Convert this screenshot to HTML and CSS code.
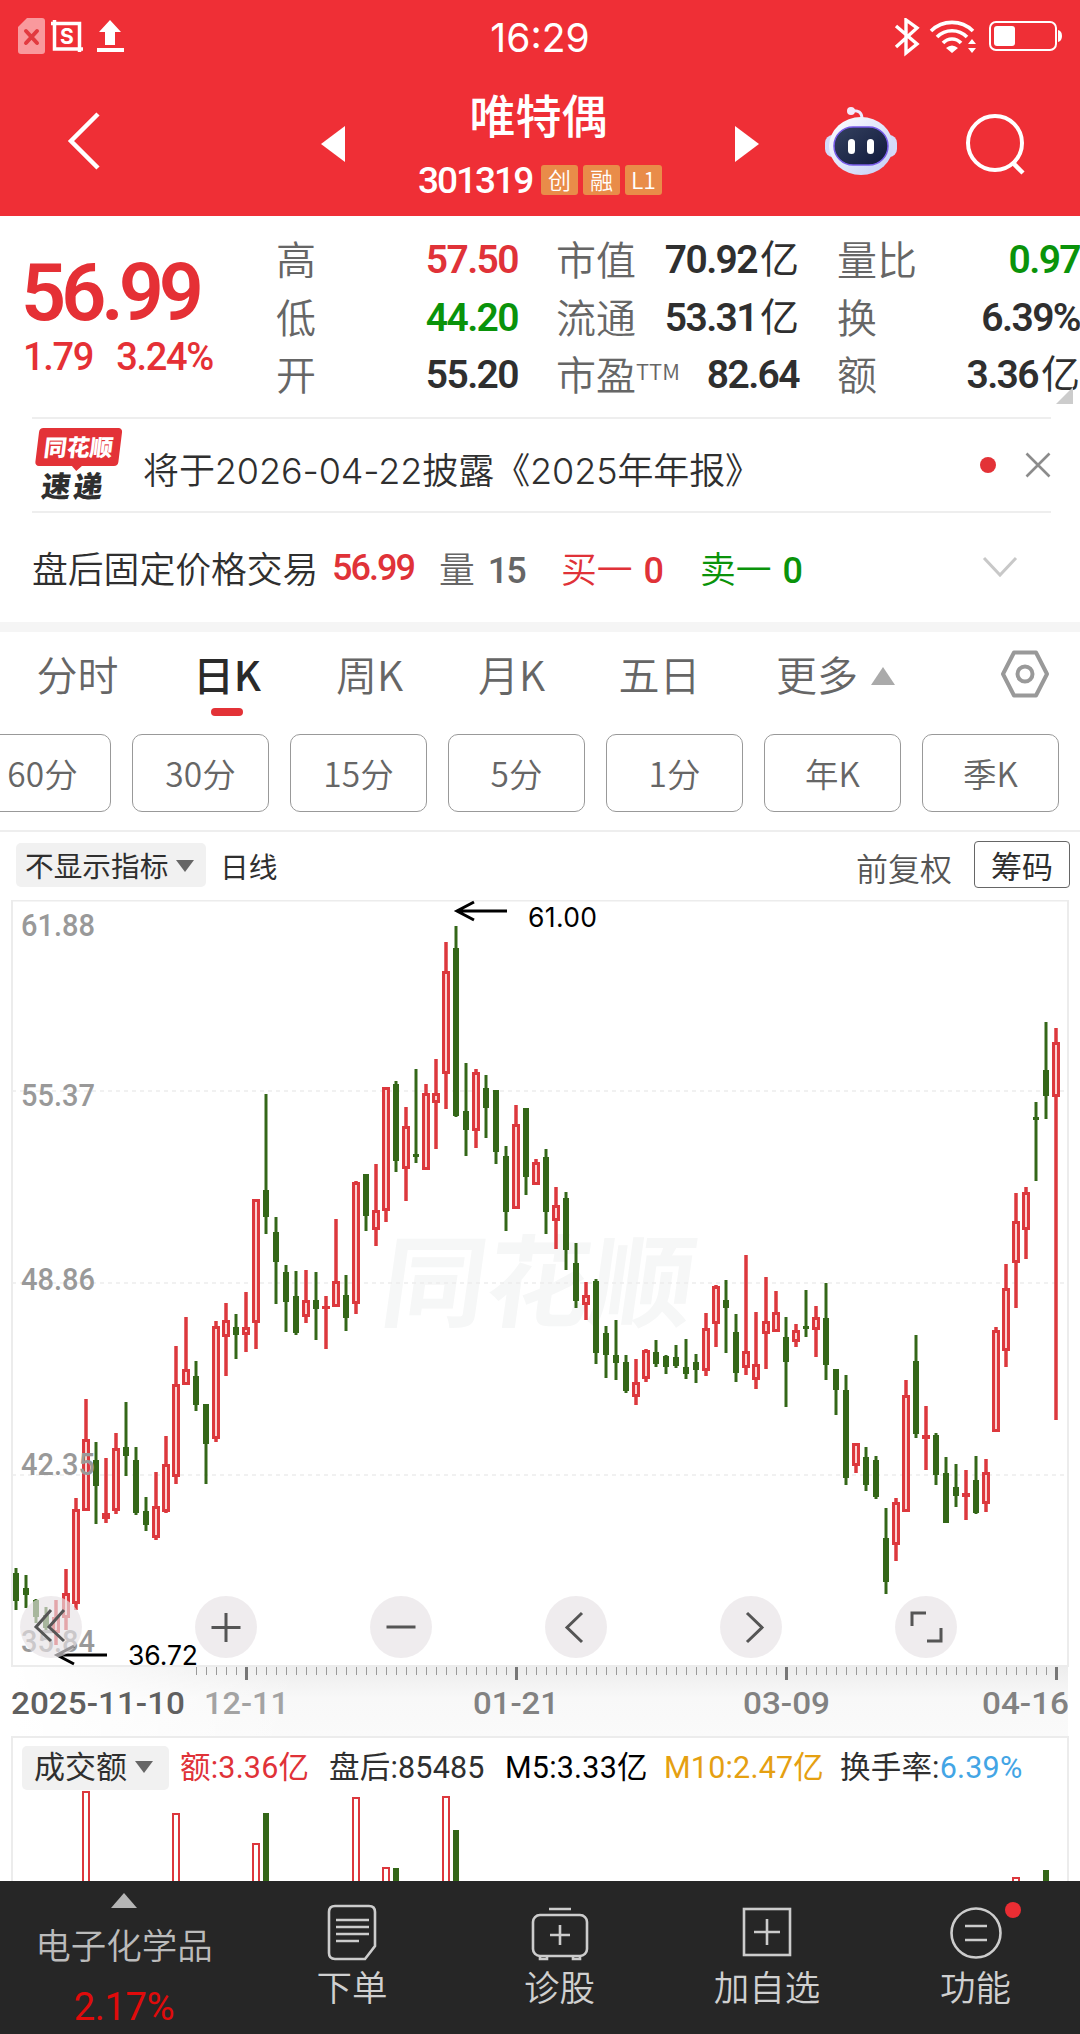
FILE: index.html
```html
<!DOCTYPE html>
<html lang="zh-CN">
<head>
    <meta charset="UTF-8">
    <title>唯特偶 301319</title>
    <link rel="stylesheet" href="styles.css">
</head>
<body>
    <header class="header">
        <div class="status-bar">
            <svg class="status-left" width="130" height="44" viewBox="0 0 130 44">
                <path d="M9 0h15a3 3 0 0 1 3 3v30a3 3 0 0 1-3 3H3a3 3 0 0 1-3-3V9z" fill="#f9999d"/>
                <path d="M8 13l11 12M19 13L8 25" stroke="#e23a40" stroke-width="4" stroke-linecap="round"/>
                <path d="M36.500 2v29H65M33 5.500h28.500V34" fill="none" stroke="#fff" stroke-width="3.500"/>
                <text x="49" y="25.5" class="shot-s">S</text>
                <path d="M92 2l11 12h-6v13H87V14h-6zM79 30h27v4H79z" fill="#fff"/>
            </svg>
            <span class="clock">16:29</span>
            <svg class="status-right" width="170" height="40" viewBox="0 0 170 40">
                <path d="M2 8l21 18-11 9V2l11 8L2 29" fill="none" stroke="#fff" stroke-width="3.4"/>
                <g fill="none" stroke="#fff" stroke-width="3.6">
                    <path d="M37 13a30 30 0 0 1 42 0M43 19a21 21 0 0 1 30 0M49 25a12 12 0 0 1 18 0"/>
                </g>
                <path d="M52 30q6-5 12 0l-6 5zM78 21l4 5h-8zM78 35l4-5h-8z" fill="#fff"/>
                <rect x="96" y="4" width="66" height="28" rx="6" fill="none" stroke="#fff" stroke-width="2"/>
                <rect x="100" y="8" width="21" height="20" rx="3" fill="#fff"/>
                <path d="M164 12q4 1 4 6t-4 6z" fill="#fff"/>
            </svg>
        </div>
        <div class="title-bar">
            <svg class="back" width="36" height="60" viewBox="0 0 36 60"><path d="M32 3L5 30l27 27" fill="none" stroke="#fff" stroke-width="4.5"/></svg>
            <svg class="prev" width="24" height="36" viewBox="0 0 24 36"><path d="M24 0v36L0 18z" fill="#fff"/></svg>
            <div class="stock">
                <h1>唯特偶</h1>
                <div class="code"><span class="num">301319</span><i>创</i><i>融</i><i>L1</i></div>
            </div>
            <svg class="next" width="24" height="36" viewBox="0 0 24 36"><path d="M0 0v36l24-18z" fill="#fff"/></svg>
            <svg class="robot" width="72" height="68" viewBox="0 0 72 68">
                <defs>
                    <linearGradient id="shell" x1="0" y1="0" x2="1" y2="1"><stop offset="0" stop-color="#fff"/><stop offset="1" stop-color="#c3cdf6"/></linearGradient>
                    <linearGradient id="visor" x1="0" y1="0" x2="1" y2="1"><stop offset="0" stop-color="#34415f"/><stop offset="1" stop-color="#10193b"/></linearGradient>
                </defs>
                <path d="M26 4q11-2 11 8" fill="none" stroke="#eceaff" stroke-width="3"/>
                <circle cx="26" cy="4" r="4" fill="#f4e9fb"/>
                <rect x="0" y="28" width="72" height="22" rx="8" fill="#d5daf9"/>
                <ellipse cx="36" cy="39" rx="32" ry="29" fill="url(#shell)"/>
                <rect x="9" y="20" width="54" height="38" rx="19" fill="url(#visor)" stroke="#775be8" stroke-width="1.5"/>
                <rect x="23" y="32" width="7" height="15" rx="3.5" fill="#fff"/>
                <rect x="42" y="32" width="7" height="15" rx="3.5" fill="#fff"/>
            </svg>
            <svg class="search" width="62" height="64" viewBox="0 0 62 64"><circle cx="30" cy="30" r="27" fill="none" stroke="#fff" stroke-width="4"/><path d="M47 49l11 11" stroke="#fff" stroke-width="4.5"/></svg>
        </div>
    </header>

    <section class="quote">
        <div class="price">
            <div class="last num">56.99</div>
            <div class="change num"><span>1.79</span><span>3.24%</span></div>
        </div>
        <div class="stats">
            <div><label>高</label><b class="red">57.50</b></div>
            <div><label>市值</label><b>70.92<em>亿</em></b></div>
            <div><label>量比</label><b class="green">0.97</b></div>
            <div><label>低</label><b class="green">44.20</b></div>
            <div><label>流通</label><b>53.31<em>亿</em></b></div>
            <div><label>换</label><b>6.39%</b></div>
            <div><label>开</label><b>55.20</b></div>
            <div><label>市盈<sup>TTM</sup></label><b>82.64</b></div>
            <div><label>额</label><b>3.36<em>亿</em></b></div>
        </div>
        <span class="corner"></span>
    </section>

    <section class="news">
        <div class="news-logo"><span>同花顺</span><strong>速递</strong></div>
        <p>将于2026-04-22披露《2025年年报》</p>
        <span class="dot"></span>
        <svg class="close" width="26" height="26" viewBox="0 0 26 26"><path d="M1.500 1.500l23 23M24.500 1.500l-23 23" stroke="#8c8c8c" stroke-width="2.600"/></svg>
    </section>

    <section class="after-hours">
        <span class="ah-title">盘后固定价格交易</span>
        <b class="ah-price red">56.99</b>
        <span class="ah-vol">量 <b>15</b></span>
        <span class="ah-buy red">买一 <b>0</b></span>
        <span class="ah-sell green">卖一 <b>0</b></span>
        <svg width="36" height="22" viewBox="0 0 36 22"><path d="M2 2l16 17L34 2" fill="none" stroke="#c8c8c8" stroke-width="3"/></svg>
    </section>

    <nav class="tabs">
        <span>分时</span>
        <span class="active">日K</span>
        <span>周K</span>
        <span>月K</span>
        <span>五日</span>
        <span class="more">更多<i></i></span>
        <svg width="50" height="48" viewBox="0 0 50 48"><path d="M14 2.500h22L47 24 36 45.500H14L3 24z" fill="none" stroke="#999" stroke-width="4" stroke-linejoin="round"/><circle cx="25" cy="24" r="7.500" fill="none" stroke="#999" stroke-width="4"/></svg>
    </nav>

    <div class="periods">
        <span>60分</span><span>30分</span><span>15分</span><span>5分</span><span>1分</span><span>年K</span><span>季K</span>
    </div>

    <div class="indicator">
        <span class="chip">不显示指标<i></i></span>
        <span class="line-name">日线</span>
        <span class="adjust">前复权</span>
        <span class="chips-btn">筹码</span>
    </div>

    <div class="chart">
        <svg id="kline" width="1080" height="836" viewBox="0 0 1080 836">
            <defs>
                <linearGradient id="axisBg" x1="0" y1="0" x2="0" y2="1"><stop offset="0" stop-color="#ededed"/><stop offset=".45" stop-color="#f8f8f8"/><stop offset="1" stop-color="#fafafa"/></linearGradient>
                <linearGradient id="axisFade" x1="0" y1="0" x2="1" y2="0"><stop offset=".05" stop-color="#fff"/><stop offset="1" stop-color="#fff" stop-opacity="0"/></linearGradient>
            </defs>
            <rect x="0" y="767" width="1068" height="69" fill="url(#axisBg)"/>
            <rect x="0" y="767" width="300" height="69" fill="url(#axisFade)"/>
            <text class="watermark" transform="translate(378 419) skewX(-8)" textLength="312" lengthAdjust="spacingAndGlyphs">同花顺</text>
            <rect x="12" y="0.500" width="1056" height="765.500" fill="none" stroke="#ececec" stroke-width="2"/>
            <path d="M12 191H1068M12 383H1068M12 575H1068" stroke="#ededed" stroke-width="1.500" stroke-dasharray="4 4"/>
            <g id="candles"></g>
            <g class="scale">
                <text x="21" y="36" textLength="74" lengthAdjust="spacingAndGlyphs">61.88</text>
                <text x="21" y="206" textLength="74" lengthAdjust="spacingAndGlyphs">55.37</text>
                <text x="21" y="390" textLength="74" lengthAdjust="spacingAndGlyphs">48.86</text>
                <text x="21" y="575" textLength="74" lengthAdjust="spacingAndGlyphs">42.35</text>
                <text x="21" y="752" textLength="74" lengthAdjust="spacingAndGlyphs">35.84</text>
            </g>
            <g fill="none" stroke="#000" stroke-width="3"><path d="M507 11H457M474 2l-17 9 17 9"/><path d="M107 755H57M74 746l-17 9 17 9"/></g>
            <text class="mark" x="528" y="27" textLength="69">61.00</text>
            <text class="mark" x="128" y="765" textLength="70">36.72</text>
            <g id="ticks"></g>
            <g class="dates">
                <text x="11" y="814" textLength="174" lengthAdjust="spacingAndGlyphs" class="first">2025-11-10</text>
                <text x="204" y="814" textLength="85" lengthAdjust="spacingAndGlyphs" class="faded">12-11</text>
                <text x="473" y="814" textLength="86" lengthAdjust="spacingAndGlyphs">01-21</text>
                <text x="743" y="814" textLength="87" lengthAdjust="spacingAndGlyphs">03-09</text>
                <text x="982" y="814" textLength="87" lengthAdjust="spacingAndGlyphs">04-16</text>
            </g>
        </svg>
        <div class="tools">
            <span><svg viewBox="0 0 62 62"><path d="M31 14L16 31l15 14M44 14L29 31l15 14"/></svg></span>
            <span><svg viewBox="0 0 62 62"><path d="M31 17v29M16.500 31.500h29"/></svg></span>
            <span><svg viewBox="0 0 62 62"><path d="M16.500 31h29"/></svg></span>
            <span><svg viewBox="0 0 62 62"><path d="M37 17L22 31.500 37 46"/></svg></span>
            <span><svg viewBox="0 0 62 62"><path d="M27 17l15 14.500L27 46"/></svg></span>
            <span><svg viewBox="0 0 62 62"><path d="M17 30V17h14M46 32v13H32"/></svg></span>
        </div>
    </div>

    <div class="volume">
        <div class="volume-head">
            <span class="chip">成交额<i></i></span>
            <span class="red">额:3.36亿</span>
            <span>盘后:85485</span>
            <span class="black">M5:3.33亿</span>
            <span class="orange">M10:2.47亿</span>
            <span>换手率:<em>6.39%</em></span>
        </div>
        <svg id="volumeBars" width="1054" height="92" viewBox="13 0 1054 92"></svg>
    </div>

    <footer class="bottom-bar">
        <div class="sector"><i></i><span>电子化学品</span><b>2.17%</b></div>
        <div class="action">
            <svg width="58" height="58" viewBox="0 0 58 58"><path d="M12 3h34q6 0 6 6v34L42 56H12q-6 0-6-6V9q0-6 6-6z"/><path d="M13 17h33M13 24h33M13 31h33M13 38h23"/></svg>
            <span>下单</span>
        </div>
        <div class="action">
            <svg width="58" height="58" viewBox="0 0 58 58"><path d="M18 6h22M9 53v3h7v-3M42 53v3h7v-3"/><rect x="2" y="12" width="54" height="41" rx="7"/><path d="M29 22v20M19 32h20"/></svg>
            <span>诊股</span>
        </div>
        <div class="action">
            <svg width="58" height="58" viewBox="0 0 58 58"><rect x="6" y="6" width="46" height="46"/><path d="M29 16v26M16 29h26"/></svg>
            <span>加自选</span>
        </div>
        <div class="action">
            <svg width="58" height="58" viewBox="0 0 58 58"><circle cx="29" cy="30" r="24.500"/><path d="M18 23h22M18 37h22"/></svg>
            <span>功能</span>
            <i class="badge"></i>
        </div>
    </footer>

    <script src="chart.js"></script>
</body>
</html>
```
FILE: styles.css
```css
/* General page styling */
* {
    box-sizing: border-box;
}

body {
    margin: 0;
    width: 1080px;
    height: 2034px;
    overflow: hidden;
    background-color: #fff;
    color: #2f2f2f;
    font-family: "Noto Sans CJK SC", sans-serif;
    font-weight: 350;
    display: flex;
    flex-direction: column;
}

i, em {
    font-style: normal;
}

svg {
    display: block;
    flex-shrink: 0;
}

.num, b {
    font-family: Roboto, "Noto Sans CJK SC", sans-serif;
    font-weight: 600;
    letter-spacing: -0.05em;
}

.red { color: #e03238; }
.green { color: #0a930a; }
.black { color: #000; }
.orange { color: #e5a011; }

/* Header */
.header {
    height: 216px;
    flex-shrink: 0;
    background-color: #ef2f36;
    color: #fff;
}

.status-bar {
    height: 72px;
    padding: 18px 16px 0 18px;
    display: grid;
    grid-template-columns: 1fr auto 1fr;
}

.clock {
    font-family: Inter, sans-serif;
    font-weight: 400;
    font-size: 39px;
    line-height: 40px;
    margin-right: 2px;
}

.status-right {
    justify-self: end;
}

.shot-s {
    font: 700 21px Inter, sans-serif;
    fill: #fff;
    text-anchor: middle;
}

.title-bar {
    height: 144px;
    display: flex;
    align-items: flex-start;
}

.back { margin: 39px 0 0 66px; }
.prev { margin: 54px 0 0 219px; }
.next { margin: 54px 0 0 67px; }
.robot { margin: 35px 0 0 66px; }
.search { margin: 41px 0 0 68px; }

.stock {
    width: 255px;
    margin-left: 68px;
    white-space: nowrap;
}

.stock h1 {
    margin: 11px 4px 0 0;
    font-size: 46px;
    font-weight: 500;
    line-height: 60px;
    text-align: center;
}

.code {
    display: flex;
    align-items: center;
    gap: 5px;
    margin-top: 20px;
    padding-left: 5px;
    height: 34px;
}

.code .num {
    width: 118px;
    font-size: 37px;
    font-weight: 500;
    letter-spacing: -2px;
    padding-top: 1px;
}

.code i {
    width: 37px;
    height: 30px;
    border-radius: 3px;
    background-color: #e98c49;
    font-size: 23px;
    line-height: 29px;
    text-align: center;
}

/* Quote block */
.quote {
    position: relative;
    height: 201px;
    flex-shrink: 0;
    display: flex;
}

.price {
    width: 276px;
    padding: 35px 0 0 21px;
    color: #e53035;
    flex-shrink: 0;
}

.last {
    font-size: 79px;
    line-height: 84px;
    letter-spacing: -5px;
}

.change {
    display: flex;
    gap: 23px;
    font-size: 38px;
    line-height: 44px;
    letter-spacing: -1.3px;
}

.change.num {
    font-weight: 500;
    padding-left: 2px;
}

.stats {
    display: grid;
    grid-template-columns: 242px 243px 243px;
    grid-template-rows: repeat(3, 57.5px);
    column-gap: 38px;
    padding-top: 14px;
}

.stats div {
    display: flex;
    justify-content: space-between;
    align-items: center;
    white-space: nowrap;
}

.stats label {
    font-size: 40px;
    line-height: 57px;
    color: #666;
}

.stats sup {
    font-size: 22px;
    line-height: 0;
    vertical-align: 10px;
}

.stats b {
    font-size: 39px;
    letter-spacing: -1.6px;
    line-height: 57px;
}

.stats b:not(:has(em)) {
    padding-top: 4px;
}

.stats em {
    font-family: "Noto Sans CJK SC", sans-serif;
    font-weight: 400;
    font-size: 39px;
    letter-spacing: 0;
    margin-left: 3px;
}

.corner {
    position: absolute;
    right: 7px;
    bottom: 13px;
    border-left: 17px solid transparent;
    border-bottom: 17px solid #ccc;
}

/* News row */
.news {
    height: 96px;
    flex-shrink: 0;
    margin: 0 29px 0 32px;
    border-top: 2px solid #eee;
    border-bottom: 2px solid #eee;
    display: flex;
    align-items: center;
}

.news-logo {
    width: 83px;
    height: 74px;
    margin-left: 3px;
    transform: skewX(-7deg);
    text-align: center;
    white-space: nowrap;
}

.news-logo span {
    display: block;
    height: 38px;
    border-radius: 4px;
    background-color: #e33237;
    color: #fff;
    font-size: 23px;
    font-weight: 900;
    line-height: 37px;
}

/* speech bubble tip */
.news-logo span::after {
    content: "";
    display: block;
    width: 0;
    margin: 0 auto;
    border: 6px solid transparent;
    border-top-color: #e33237;
    border-bottom: 0;
}

.news-logo strong {
    display: block;
    font-size: 29px;
    font-weight: 900;
    line-height: 36px;
    letter-spacing: 3px;
}

.news p {
    margin: 5px 0 0 25px;
    width: 640px;
    font-family: Inter, "Noto Sans CJK SC", sans-serif;
    font-size: 36px;
    letter-spacing: -0.1px;
    white-space: nowrap;
}

.dot {
    width: 16px;
    height: 16px;
    border-radius: 50%;
    background-color: #e33237;
    margin-left: 197px;
}

.news .close {
    margin-left: auto;
}

/* After-hours trading row */
.after-hours {
    height: 109px;
    flex-shrink: 0;
    padding-left: 32px;
    padding-bottom: 2px;
    display: flex;
    align-items: center;
    font-size: 35.8px;
    white-space: nowrap;
}

.after-hours b {
    font-size: 36px;
    letter-spacing: -2px;
    font-weight: 500;
}

.ah-title { width: 300px; }
.ah-price { width: 107px; padding-top: 3px; }
.ah-vol { width: 122px; color: #666; }
.ah-vol b { margin-left: 5px; }
.ah-buy { width: 139px; }
.ah-buy b, .ah-sell b { margin-left: 3px; }
.ah-sell { width: 282px; }

/* Chart type tabs */
.tabs {
    height: 112px;
    flex-shrink: 0;
    border-top: 10px solid #f5f5f5;
    display: grid;
    grid-template-columns: 155px 144px 141px 143px 153px 264px 50px;
    font-size: 41px;
    line-height: 82px;
    color: #666;
    text-align: center;
}

.tabs svg {
    margin-top: 18px;
}

.tabs .active {
    color: #2a2a2a;
    font-weight: 500;
}

.tabs .active::after {
    content: "";
    display: block;
    width: 32px;
    height: 8px;
    margin: -6px auto 0;
    border-radius: 4px;
    background-color: #e33237;
}

.tabs .more {
    text-align: left;
    padding-left: 40px;
}

.more i {
    display: inline-block;
    margin-left: 13px;
    border: 12px solid transparent;
    border-top: 0;
    border-bottom: 18px solid #aaa;
    vertical-align: 6px;
}

/* Minute periods */
.periods {
    height: 98px;
    flex-shrink: 0;
    display: flex;
    gap: 21px;
    margin-left: -26px;
    border-bottom: 2px solid #eee;
}

.periods span {
    width: 137px;
    height: 78px;
    flex-shrink: 0;
    border: 1.500px solid #999;
    border-radius: 10px;
    font-size: 33.5px;
    line-height: 76px;
    text-align: center;
    color: #666;
}

/* Indicator row */
.indicator {
    height: 68px;
    flex-shrink: 0;
    padding: 11px 10px 0 16px;
    display: flex;
    font-size: 28.7px;
    line-height: 46px;
    font-weight: 400;
}

.chip {
    height: 44px;
    border-radius: 5px;
    background-color: #f1f1f1;
    padding-left: 9px;
    line-height: 43px;
}

.indicator .chip {
    width: 190px;
}

.chip i {
    display: inline-block;
    margin-left: 8px;
    border: 9px solid transparent;
    border-bottom: 0;
    border-top: 12px solid #666;
    vertical-align: 5px;
}

.line-name {
    margin-left: 14px;
}

.adjust {
    margin-left: auto;
    font-size: 32px;
    font-weight: 350;
    line-height: 49px;
    color: #555;
}

.chips-btn {
    width: 96px;
    height: 47px;
    margin: -2px 0 0 22px;
    border: 1.500px solid #666;
    border-radius: 4px;
    font-size: 31px;
    line-height: 45px;
    text-align: center;
}

/* Candlestick chart */
.chart {
    position: relative;
    height: 836px;
    flex-shrink: 0;
}

.watermark {
    font-size: 100px;
    font-weight: 700;
    fill: #f6f7f7;
}

.scale text, .dates text {
    font-family: Roboto, sans-serif;
    font-size: 32px;
    font-weight: 500;
    fill: #999;
}

.dates text { fill: #828282; }
.dates .first { fill: #606060; }
.dates .faded { fill: #a3a3a3; }

.mark {
    font-family: Inter, sans-serif;
    font-size: 26.5px;
    font-weight: 400;
    fill: #000;
}

.tools {
    position: absolute;
    left: 19.5px;
    top: 696px;
    display: flex;
    gap: 113px;
}

.tools span {
    width: 62px;
    height: 62px;
    border-radius: 50%;
    background-color: rgba(230, 226, 229, 0.65);
}

.tools path {
    fill: none;
    stroke: #555;
    stroke-width: 3;
}

/* Turnover chart */
.volume {
    height: 145px;
    flex-shrink: 0;
    margin: 0 11px;
    border: 2px solid #ececec;
    border-bottom: 0;
    overflow: hidden;
}

.volume-head {
    height: 51px;
    padding: 8px 0 0 9px;
    display: grid;
    grid-template-columns: 158px 149px 176px 159px 176px 1fr;
    font-family: Roboto, "Noto Sans CJK SC", sans-serif;
    font-size: 30.5px;
    letter-spacing: 0.2px;
    line-height: 43px;
    font-weight: 400;
    white-space: nowrap;
}

.volume .chip {
    width: 147px;
    font-size: 31px;
    padding-left: 12px;
    letter-spacing: 0;
    line-height: 44px;
}

.volume em {
    color: #43a5e5;
}

/* Bottom navigation */
.bottom-bar {
    height: 153px;
    flex-shrink: 0;
    background-color: #262626;
    color: #d0d0d0;
    display: grid;
    grid-template-columns: 248px 208px 207px 208px 209px;
    font-size: 35.5px;
    text-align: center;
}

.sector {
    display: flex;
    flex-direction: column;
    align-items: center;
}

.sector i {
    margin-top: 12px;
    border: 13px solid transparent;
    border-top: 0;
    border-bottom: 15px solid #b5b5b5;
}

.sector span {
    margin-top: 15px;
    line-height: 42px;
    color: #bbb;
}

.sector b {
    margin-top: 21px;
    font-size: 38px;
    line-height: 42px;
    font-weight: 400;
    letter-spacing: -0.3px;
    color: #e00b0b;
}

.action {
    position: relative;
    display: flex;
    flex-direction: column;
    align-items: center;
    padding-top: 22px;
}

.action svg {
    fill: none;
    stroke: #ccc;
    stroke-width: 2.600;
}

.action span {
    margin-top: 4px;
    line-height: 42px;
}

.badge {
    position: absolute;
    left: 134px;
    top: 21px;
    width: 16px;
    height: 16px;
    border-radius: 50%;
    background-color: #ea2d33;
}
```
FILE: chart.js
```javascript
// one row per day: colour, high, low, body top, body bottom (y in chart pixels)
const days = [
    ['g',668,710,673,701],['g',675,708,688,695],['g',699,723,700,717],['g',707,730,715,728],['r',700,745,717,733],
    ['r',669,730,693,718],['r',598,710,609,704],['r',499,611,539,611],['g',542,624,560,586],['r',558,623,613,619],
    ['r',533,614,548,611],['g',502,576,547,556],['g',547,615,560,613],['g',597,631,611,625],['r',572,640,606,638],
    ['r',536,613,564,612],['r',446,584,484,577],['r',417,485,469,485],['g',461,511,476,505],['g',504,584,504,544],
    ['r',421,542,426,539],['r',403,476,420,437],['g',414,459,427,435],['r',392,452,427,435],['r',299,449,299,423],
    ['g',194,334,290,317],['g',317,404,332,362],['g',365,432,372,402],['g',371,435,396,433],['r',370,423,400,417],
    ['g',372,440,400,409],['r',396,449,406,409],['r',319,407,381,407],['g',375,431,395,418],['r',281,414,282,404],
    ['g',274,331,274,316],['r',264,346,310,330],['r',187,322,187,311],['g',181,272,184,261],['r',207,301,226,269],
    ['g',169,263,254,257],['r',184,270,193,270],['r',159,249,193,203],['r',42,209,71,174],['g',26,217,48,216],
    ['g',163,256,211,230],['r',169,248,172,231],['g',175,238,188,208],['g',190,264,190,252],['g',246,331,256,312],
    ['r',205,309,224,309],['g',208,295,208,277],['r',259,285,262,285],['g',249,334,257,312],['r',287,349,305,321],
    ['g',292,370,298,350],['g',343,408,363,401],['r',382,420,395,405],['g',379,464,381,453],['g',426,478,433,455],
    ['g',420,480,455,463],['g',455,493,462,491],['r',459,505,482,497],['r',449,482,450,479],['g',440,467,452,464],
    ['g',455,474,456,467],['g',445,468,457,466],['g',439,479,467,474],['g',454,483,462,470],['r',413,476,428,471],
    ['r',385,447,386,424],['g',380,453,400,408],['g',414,482,432,473],['r',355,475,451,468],['r',412,489,464,480],
    ['r',377,469,421,434],['r',391,432,412,432],['g',417,507,437,462],['r',424,447,430,442],['g',390,437,426,429],
    ['r',406,457,417,430],['g',383,480,418,465],['g',469,515,469,490],['g',475,585,490,578],['r',543,573,543,566],
    ['g',547,591,557,585],['g',556,599,560,597],['g',608,694,638,682],['r',598,661,602,645],['r',480,612,495,612],
    ['g',435,538,461,534],['r',506,570,535,539],['g',533,585,535,575],['g',557,623,573,623],['g',564,607,587,596],
    ['r',570,620,593,597],['g',556,614,580,613],['r',559,612,572,604],['r',427,532,430,532],['r',364,467,388,451],
    ['r',293,408,321,363],['r',287,359,292,330],['g',202,281,217,220],['g',122,219,170,196],['r',128,520,142,197]
];

const RED = '#dc383d';
const GREEN = '#346718';
const dayX = i => 16 + i * 10;

let candles = '';
days.forEach(([color, high, low, top, bottom], i) => {
    const x = dayX(i);
    if (color === 'g') {
        candles += `<path d="M${x} ${high}V${low}" stroke="${GREEN}" stroke-width="3"/>`;
        candles += `<rect x="${x - 3}" y="${top}" width="6" height="${bottom - top}" fill="${GREEN}"/>`;
        return;
    }
    candles += `<path d="M${x} ${high}V${low}" stroke="${RED}" stroke-width="3.500"/>`;
    candles += `<rect x="${x - 4}" y="${top}" width="8" height="${bottom - top}" fill="${RED}"/>`;
    if (bottom - top > 7) {
        candles += `<rect x="${x - 1}" y="${top + 3}" width="2" height="${bottom - top - 6}" fill="#fbd3d3"/>`;
    }
});
document.getElementById('candles').innerHTML = candles;

// time ticks, a thick one at each dated day
let ticks = '';
for (let x = 196; x <= 1056; x += 10) {
    const major = [246, 516, 786, 1056].includes(x);
    ticks += `<path d="M${x + 0.5} 767v${major ? 13 : 8}" stroke="${major ? '#777' : '#999'}" stroke-width="${major ? 3 : 1}"/>`;
}
document.getElementById('ticks').innerHTML = ticks;

// turnover bars: day index, top
const bars = [[7,2],[16,24],[24,54],[25,24],[34,8],[37,78],[38,79],[43,7],[44,41],[100,88],[103,81]];
document.getElementById('volumeBars').innerHTML = bars.map(([i, top]) => {
    const x = dayX(i);
    return days[i][0] === 'g'
        ? `<rect x="${x - 3}" y="${top}" width="6" height="100" fill="${GREEN}"/>`
        : `<rect x="${x - 3}" y="${top + 1}" width="6" height="100" fill="#fff" stroke="${RED}" stroke-width="2"/>`;
}).join('');
```
